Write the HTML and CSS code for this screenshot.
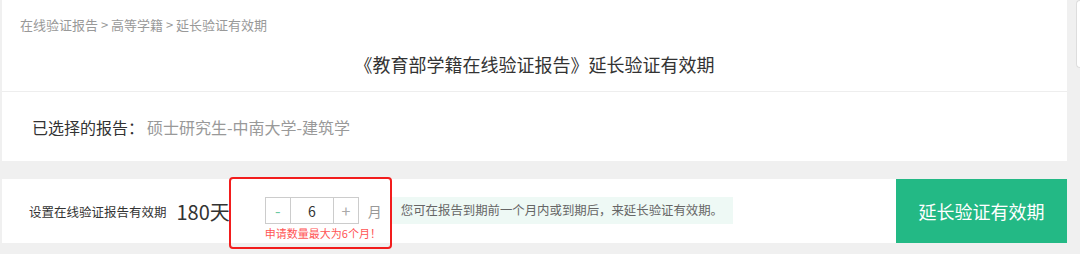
FILE: index.html
```html
<!DOCTYPE html>
<html lang="zh-CN">
<head>
    <meta charset="UTF-8">
    <meta name="viewport" content="width=device-width, initial-scale=1.0">
    <title>延长验证有效期</title>
    <link rel="stylesheet" href="styles.css">
</head>
<body>
    <div class="page">
        <main class="main">
            <section class="card report-card">
                <div class="crumbs">在线验证报告 &gt; 高等学籍 &gt; 延长验证有效期</div>
                <h1 class="title">《教育部学籍在线验证报告》延长验证有效期</h1>
                <div class="selected">
                    <span class="selected-label">已选择的报告：</span>
                    <span class="selected-value">硕士研究生-中南大学-建筑学</span>
                </div>
            </section>

            <section class="card extend-card">
                <span class="period-label">设置在线验证报告有效期</span>
                <span class="days">180天</span>
                <div class="counter-wrap">
                    <div class="counter-row">
                        <div class="counter">
                            <button class="step minus">-</button>
                            <input class="count" type="text" value="6">
                            <button class="step plus">+</button>
                        </div>
                        <span class="unit">月</span>
                    </div>
                    <div class="limit">申请数量最大为6个月！</div>
                    <!-- annotation box drawn over the counter -->
                    <div class="mark"></div>
                </div>
                <div class="tip">您可在报告到期前一个月内或到期后，来延长验证有效期。</div>
                <button class="extend-btn">延长验证有效期</button>
            </section>
        </main>
        <aside class="side"></aside>
    </div>
</body>
</html>
```

FILE: styles.css
```css
body {
    margin: 0;
    padding: 0;
    background-color: #f0f0f0;
    font-family: "Noto Sans CJK SC", "Noto Sans", sans-serif;
    color: #333;
    overflow: hidden;
}

.page {
    display: flex;
    align-items: flex-start;
    gap: 9px;
    padding-left: 2px;
    height: 254px;
}

.main {
    flex: 0 0 1065px;
}

.card {
    background-color: #fff;
}

.report-card {
    height: 161px;
}

.crumbs {
    padding: 15px 18px 0;
    font-size: 13px;
    line-height: 20px;
    color: #999;
}

.title {
    margin: 0;
    padding: 17px 0 15px;
    font-size: 18px;
    font-weight: normal;
    line-height: 24px;
    text-align: center;
    color: #333;
    border-bottom: 1px solid #eee;
}

.selected {
    display: flex;
    align-items: center;
    height: 69px;
    padding-left: 30px;
    font-size: 16px;
}

.selected-label {
    color: #333;
    margin-right: 3px;
}

.selected-value {
    color: #999;
}

.extend-card {
    display: flex;
    align-items: center;
    height: 64px;
    margin-top: 18px;
}

.period-label {
    padding-left: 27px;
    font-size: 12.5px;
}

.days {
    margin-left: 10px;
    font-size: 20px;
}

.counter-wrap {
    position: relative;
    align-self: flex-start;
    margin-top: 18px;
    margin-left: 35px;
}

.counter-row {
    display: flex;
    align-items: center;
}

.counter {
    display: flex;
    height: 25px;
    border: 1px solid #ccc;
}

.step {
    width: 25px;
    padding: 0;
    border: none;
    background: #fff;
    font-family: inherit;
    font-size: 16px;
    line-height: 25px;
    color: #aaa;
}

.minus {
    border-right: 1px solid #ccc;
    color: #6cc9a2;
}

.plus {
    border-left: 1px solid #ccc;
}

.count {
    width: 42px;
    padding: 0;
    border: none;
    text-align: center;
    font-family: inherit;
    font-size: 14px;
    color: #333;
    outline: none;
}

.unit {
    margin-left: 9px;
    font-size: 14px;
    color: #999;
}

.limit {
    margin-top: 1px;
    font-size: 11px;
    line-height: 16px;
    color: #f55;
}

.mark {
    position: absolute;
    left: -36px;
    top: -20px;
    width: 159px;
    height: 68px;
    border: 2px solid #f21d1d;
    border-radius: 4px;
}

.tip {
    align-self: flex-start;
    margin-top: 18px;
    margin-left: 9px;
    padding: 0 10px;
    height: 27px;
    line-height: 27px;
    font-size: 12.4px;
    color: #666;
    background-color: #eef9f5;
}

.extend-btn {
    align-self: stretch;
    width: 171px;
    margin-left: auto;
    border: none;
    background-color: #23b985;
    color: #fff;
    font-family: inherit;
    font-size: 18px;
}

.side {
    box-sizing: border-box;
    flex: 0 0 4px;
    height: 68px;
    background-color: #fff;
    border: 1px solid #ddd;
    border-right: none;
    border-radius: 4px 0 0 4px;
}
```
